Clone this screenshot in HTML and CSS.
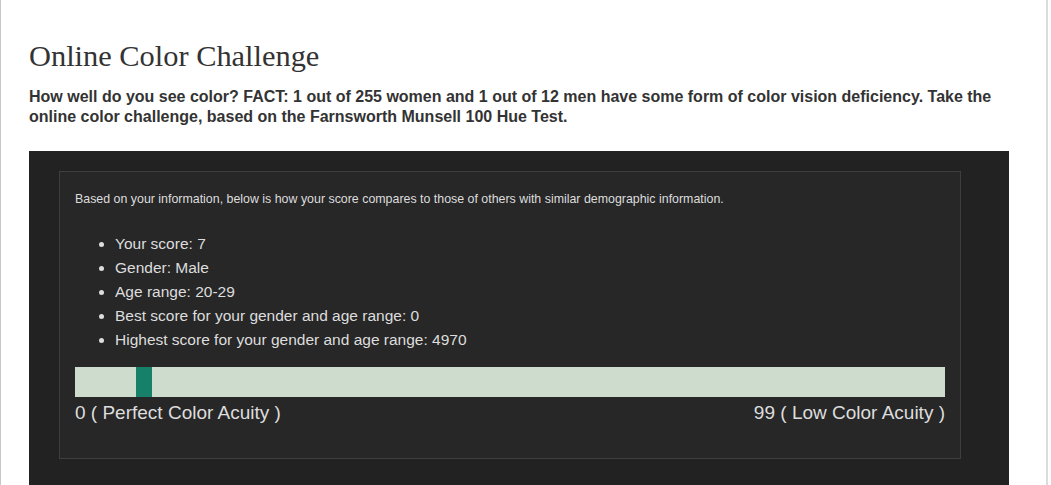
FILE: index.html
```html
<!DOCTYPE html>
<html lang="en">
<head>
    <meta charset="UTF-8">
    <title>Online Color Challenge</title>
    <link rel="stylesheet" href="styles.css">
</head>
<body>
    <div class="page">
        <h1>Online Color Challenge</h1>
        <p class="intro">How well do you see color? FACT: 1 out of 255 women and 1 out of 12 men have some form of color vision deficiency. Take the online color challenge, based on the Farnsworth Munsell 100 Hue Test.</p>

        <div class="results">
            <div class="results-box">
                <p class="results-note">Based on your information, below is how your score compares to those of others with similar demographic information.</p>
                <ul class="results-list">
                    <li>Your score: 7</li>
                    <li>Gender: Male</li>
                    <li>Age range: 20-29</li>
                    <li>Best score for your gender and age range: 0</li>
                    <li>Highest score for your gender and age range: 4970</li>
                </ul>
                <div class="score-bar">
                    <div class="score-marker" style="left: 7%;"></div>
                </div>
                <div class="score-labels">
                    <span>0 ( Perfect Color Acuity )</span>
                    <span>99 ( Low Color Acuity )</span>
                </div>
            </div>
        </div>
    </div>
</body>
</html>
```

FILE: styles.css
```css
body {
    margin: 0;
    background: #fff;
    font-family: "Liberation Sans", Arial, sans-serif;
}

.page {
    width: 1048px;
    min-height: 485px;
    padding: 38px 0 0 28px;
    border-left: 1px solid #c8c8c8;
    border-right: 2px solid #dcdcdc;
    box-sizing: border-box;
}

h1 {
    margin: 0;
    font-family: Georgia, "Liberation Serif", serif;
    font-weight: normal;
    font-size: 30.4px;
    line-height: 36px;
    color: #333;
}

.intro {
    width: 980px;
    margin: 13px 0 24px;
    font-size: 16px;
    font-weight: bold;
    line-height: 20px;
    color: #333;
}

.results {
    width: 980px;
    background-color: #222;
    padding: 20px 48px 30px 30px;
    box-sizing: border-box;
}

.results-box {
    width: 870px;
    border: 1px solid #3e3e3e;
    background-color: #272727;
    padding: 15px;
    color: #ddd;
}

.results-note {
    margin: 3px 0 0;
    font-size: 12.4px;
    line-height: 18px;
}

.results-list {
    margin: 24px 0 0;
    padding-left: 40px;
    font-size: 15.5px;
    line-height: 24px;
}

.score-bar {
    position: relative;
    height: 30px;
    margin-top: 15px;
    background-color: #cddccd;
}

.score-marker {
    position: absolute;
    top: 0;
    width: 16px;
    height: 100%;
    background-color: #168068;
}

.score-labels {
    display: flex;
    justify-content: space-between;
    margin: 5px 0 19px;
    font-size: 19px;
    line-height: 22px;
}
```
